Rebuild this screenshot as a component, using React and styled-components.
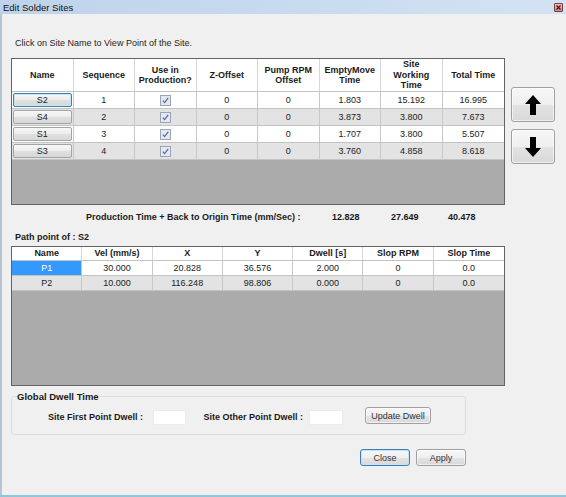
import React from 'react';
import styled, { createGlobalStyle, css } from 'styled-components';

const GlobalStyle = createGlobalStyle`
  html, body {
    margin: 0;
    padding: 0;
    background: #f0f0f0;
  }
  body {
    font-family: "Liberation Sans", Arial, sans-serif;
    color: #1e1e1e;
  }
  * {
    box-sizing: border-box;
  }
`;

const Window = styled.div`
  width: 566px;
  height: 497px;
  display: flex;
  flex-direction: column;
  background: #f0f0f0;
  border-bottom: 2px solid #8ec6db;
  overflow: hidden;
`;

const TitleBar = styled.div`
  height: 14px;
  flex: none;
  display: flex;
  align-items: center;
  justify-content: space-between;
  padding: 0 3px;
  font-size: 9.5px;
  color: #111;
  background: linear-gradient(90deg, #bed3ea 0%, #c8dbef 55%, #d3e3f3 100%);
`;

const CloseBox = styled.span`
  width: 9px;
  height: 9px;
  display: flex;
  align-items: center;
  justify-content: center;
  border: 1px solid #7d3a3a;
  border-radius: 1px;
  background: linear-gradient(#e9c0c0, #c98a8a);
`;

const Body = styled.div`
  flex: 1;
  display: flex;
  flex-direction: column;
  border-left: 2px solid #b8c5d3;
  padding-left: 9px;
`;

const Instruction = styled.div`
  margin-top: 24px;
  padding-left: 4px;
  font-size: 9px;
  line-height: 11px;
`;

const TopRow = styled.div`
  margin-top: 9px;
  display: flex;
  gap: 6px;
`;

const Grid = styled.div`
  width: 494px;
  height: ${p => p.$height}px;
  flex: none;
  display: flex;
  flex-direction: column;
  border: 1px solid #646464;
  background: #ababab;
`;

const Row = styled.div`
  display: grid;
  grid-template-columns: repeat(${p => p.$cols}, 1fr);
  height: ${p => p.$height}px;
  flex: none;
  background: ${p => (p.$alt ? '#e3e3e3' : '#fff')};
  border-bottom: 1px solid #c3c3c3;
`;

const HeadCell = styled.div`
  display: flex;
  align-items: center;
  justify-content: center;
  text-align: center;
  font-size: 9px;
  font-weight: bold;
  line-height: 10.5px;
  color: #1a1a1a;
  border-right: 1px solid #d6d6d6;
  &:last-child {
    border-right: none;
  }
`;

const Cell = styled.div`
  display: flex;
  align-items: center;
  justify-content: center;
  font-size: 9px;
  color: #222;
  border-right: 1px solid #c8c8c8;
  padding: ${p => (p.$pad ? '1px' : '0')};
  &:last-child {
    border-right: none;
  }
  ${p =>
    p.$selected &&
    css`
      background: #3399ff;
      color: #fff;
    `}
`;

const CellButton = styled.div`
  width: 100%;
  height: 100%;
  display: flex;
  align-items: center;
  justify-content: center;
  font-size: 9px;
  color: #222;
  border: 1px solid ${p => (p.$focus ? '#3c7fb1' : '#a4a4a4')};
  border-radius: 2px;
  background: linear-gradient(#f7f7f7 0%, #ececec 50%, #e0e0e0 51%, #d7d7d7 100%);
  ${p =>
    p.$focus &&
    css`
      box-shadow: inset 0 0 0 1px #c6e6f7;
    `}
`;

const ArrowColumn = styled.div`
  padding-top: 29px;
  display: flex;
  flex-direction: column;
  gap: 7px;
`;

const PushButton = styled.button`
  width: ${p => p.$w}px;
  height: ${p => p.$h}px;
  padding: 0;
  display: flex;
  align-items: center;
  justify-content: center;
  font-family: "Liberation Sans", Arial, sans-serif;
  font-size: 9px;
  color: #333;
  border: 1px solid ${p => (p.$default ? '#3c7fb1' : '#a0a0a0')};
  border-radius: 3px;
  background: linear-gradient(#f7f7f7 0%, #efefef 50%, #e3e3e3 51%, #d9d9d9 100%);
  box-shadow: inset 0 0 0 1px ${p => (p.$default ? '#c2e4f6' : 'rgba(255,255,255,0.6)')};
`;

const Summary = styled.div`
  margin-top: 7px;
  padding-left: 75px;
  display: grid;
  grid-template-columns: 246px 59px 57px auto;
  font-size: 9px;
  line-height: 11px;
  font-weight: bold;
  color: #1a1a1a;
`;

const SectionLabel = styled.div`
  margin-top: 9px;
  padding-left: 4px;
  font-size: 9px;
  line-height: 11px;
  font-weight: bold;
  color: #1a1a1a;
`;

const GridBelow = styled(Grid)`
  margin-top: 3px;
`;

const GroupBox = styled.fieldset`
  width: 455px;
  margin: 5px 0 0 0;
  padding: 5px 0 10px 5px;
  border: 1px solid #dcdcdc;
  border-radius: 3px;
  min-inline-size: 0;
`;

const Legend = styled.legend`
  padding: 0;
  font-size: 9.5px;
  line-height: 11px;
  font-weight: bold;
  color: #1a1a1a;
`;

const DwellRow = styled.div`
  display: flex;
  align-items: center;
  height: 17px;
`;

const FieldLabel = styled.span`
  width: ${p => p.$w}px;
  text-align: right;
  font-size: 9px;
  font-weight: bold;
  color: #1a1a1a;
  padding-top: 2px;
`;

const FieldInput = styled.input`
  width: ${p => p.$w}px;
  height: 15px;
  margin-left: ${p => p.$gap}px;
  margin-top: 4px;
  padding: 0;
  border: 1px solid #ececec;
  background: #fff;
  outline: none;
`;

const Spacer = styled.span`
  width: ${p => p.$w}px;
  flex: none;
`;

const Footer = styled.div`
  width: 455px;
  margin-top: 14px;
  display: flex;
  justify-content: flex-end;
  gap: 6px;
`;

const sites = [
  { name: 'S2', seq: 1, empty: '1.803', work: '15.192', total: '16.995', focus: true },
  { name: 'S4', seq: 2, empty: '3.873', work: '3.800', total: '7.673' },
  { name: 'S1', seq: 3, empty: '1.707', work: '3.800', total: '5.507' },
  { name: 'S3', seq: 4, empty: '3.760', work: '4.858', total: '8.618' },
];

const points = [
  { name: 'P1', vel: '30.000', x: '20.828', y: '36.576', dwell: '2.000', rpm: '0', time: '0.0', selected: true },
  { name: 'P2', vel: '10.000', x: '116.248', y: '98.806', dwell: '0.000', rpm: '0', time: '0.0' },
];

function CheckIcon() {
  return (
    <svg width="11" height="11" viewBox="0 0 11 11">
      <rect x="0.5" y="0.5" width="10" height="10" fill="#e4e8f0" stroke="#9aa5b8" />
      <path d="M2.8 5.6 L4.6 7.6 L8.2 2.8" fill="none" stroke="#5d6f8e" strokeWidth="1.3" />
    </svg>
  );
}

function Arrow({ down }) {
  return (
    <svg width="16" height="20" viewBox="0 0 16 20" style={down ? { transform: 'rotate(180deg)' } : undefined}>
      <polygon points="8,0 16,9 11,9 11,20 5,20 5,9 0,9" fill="#000" />
    </svg>
  );
}

export default function App() {
  return (
    <>
      <GlobalStyle />
      <Window>
        <TitleBar>
          <span>Edit Solder Sites</span>
          <CloseBox>
            <svg width="5" height="5" viewBox="0 0 5 5">
              <path d="M0.5 0.5 L4.5 4.5 M4.5 0.5 L0.5 4.5" stroke="#4a1414" strokeWidth="1.2" />
            </svg>
          </CloseBox>
        </TitleBar>
        <Body>
          <Instruction>Click on Site Name to View Point of the Site.</Instruction>
          <TopRow>
            <Grid $height={147}>
              <Row $cols={8} $height={33}>
                <HeadCell>Name</HeadCell>
                <HeadCell>Sequence</HeadCell>
                <HeadCell>Use in<br />Production?</HeadCell>
                <HeadCell>Z-Offset</HeadCell>
                <HeadCell>Pump RPM<br />Offset</HeadCell>
                <HeadCell>EmptyMove<br />Time</HeadCell>
                <HeadCell>Site<br />Working<br />Time</HeadCell>
                <HeadCell>Total Time</HeadCell>
              </Row>
              {sites.map((s, i) => (
                <Row key={s.name} $cols={8} $height={17} $alt={i % 2 === 1}>
                  <Cell $pad>
                    <CellButton $focus={s.focus}>{s.name}</CellButton>
                  </Cell>
                  <Cell>{s.seq}</Cell>
                  <Cell><CheckIcon /></Cell>
                  <Cell>0</Cell>
                  <Cell>0</Cell>
                  <Cell>{s.empty}</Cell>
                  <Cell>{s.work}</Cell>
                  <Cell>{s.total}</Cell>
                </Row>
              ))}
            </Grid>
            <ArrowColumn>
              <PushButton $w={44} $h={35}><Arrow /></PushButton>
              <PushButton $w={44} $h={35}><Arrow down /></PushButton>
            </ArrowColumn>
          </TopRow>
          <Summary>
            <span>Production Time + Back to Origin Time (mm/Sec) :</span>
            <span>12.828</span>
            <span>27.649</span>
            <span>40.478</span>
          </Summary>
          <SectionLabel>Path point of : S2</SectionLabel>
          <GridBelow $height={140}>
            <Row $cols={7} $height={14}>
              <HeadCell>Name</HeadCell>
              <HeadCell>Vel (mm/s)</HeadCell>
              <HeadCell>X</HeadCell>
              <HeadCell>Y</HeadCell>
              <HeadCell>Dwell [s]</HeadCell>
              <HeadCell>Slop RPM</HeadCell>
              <HeadCell>Slop Time</HeadCell>
            </Row>
            {points.map((p, i) => (
              <Row key={p.name} $cols={7} $height={15} $alt={i % 2 === 1}>
                <Cell $selected={p.selected}>{p.name}</Cell>
                <Cell>{p.vel}</Cell>
                <Cell>{p.x}</Cell>
                <Cell>{p.y}</Cell>
                <Cell>{p.dwell}</Cell>
                <Cell>{p.rpm}</Cell>
                <Cell>{p.time}</Cell>
              </Row>
            ))}
          </GridBelow>
          <GroupBox>
            <Legend>Global Dwell Time</Legend>
            <DwellRow>
              <FieldLabel $w={126}>Site First Point Dwell :</FieldLabel>
              <FieldInput $w={33} $gap={10} />
              <FieldLabel $w={117}>Site Other Point Dwell :</FieldLabel>
              <FieldInput $w={34} $gap={6} />
              <Spacer $w={22} />
              <PushButton $w={66} $h={17}>Update Dwell</PushButton>
            </DwellRow>
          </GroupBox>
          <Footer>
            <PushButton $w={50} $h={17} $default>Close</PushButton>
            <PushButton $w={50} $h={17}>Apply</PushButton>
          </Footer>
        </Body>
      </Window>
    </>
  );
}
